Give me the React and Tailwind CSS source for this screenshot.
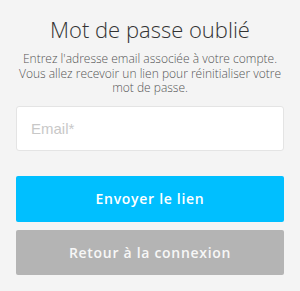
import React from 'react'

const App = () => {
  return (
    <div className="min-h-[291px] w-[300px] bg-[#f4f4f4] px-4 pt-[15px] font-['Open_Sans',sans-serif]">
      {/* Header */}
      <h1 className="text-center text-[22px] leading-[28px] font-light text-[#333]">Mot de passe oublié</h1>
      <p className="mt-[9px] text-center text-[12px] leading-[14.5px] font-light text-[#555]">
        Entrez l'adresse email associée à votre compte. Vous allez recevoir un lien pour réinitialiser votre mot de passe.
      </p>

      {/* Form */}
      <div className="mt-[10px] flex flex-col">
        <input
          type="email"
          placeholder="Email*"
          className="h-[45px] w-full rounded-[3px] border border-[#e4e4e4] bg-white px-[14px] text-[15px] text-[#333] outline-none placeholder:text-[#c8c8c8] font-['Liberation_Sans',sans-serif]"
        />
        <button className="mt-[25px] h-[46px] w-full rounded-[2px] bg-[#00bfff] text-[14px] font-semibold tracking-[0.7px] text-white">
          Envoyer le lien
        </button>
        <button className="mt-[8px] h-[45px] w-full rounded-[2px] bg-[#b4b4b4] text-[14px] font-semibold tracking-[0.7px] text-[#f7f7f7]">
          Retour à la connexion
        </button>
      </div>
    </div>
  )
}

export default App
